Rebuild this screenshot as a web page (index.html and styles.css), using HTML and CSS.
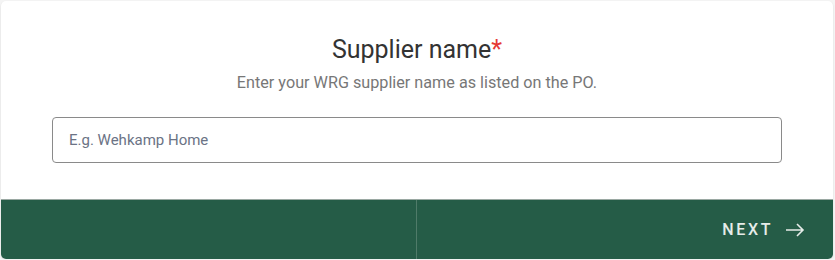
FILE: index.html
```html
<!DOCTYPE html>
<html lang="en">
<head>
    <meta charset="UTF-8">
    <meta name="viewport" content="width=device-width, initial-scale=1.0">
    <title>Supplier name</title>
    <link rel="stylesheet" href="styles.css">
</head>
<body>
    <div class="card">
        <div class="step">
            <h2 class="step-title">Supplier name<span class="required">*</span></h2>
            <p class="step-hint">Enter your WRG supplier name as listed on the PO.</p>
            <input type="text" class="field" placeholder="E.g. Wehkamp Home">
        </div>
        <div class="actions">
            <button type="button" class="action back"></button>
            <button type="button" class="action next">
                NEXT
                <svg width="20" height="14" viewBox="0 0 20 14" fill="none" stroke="currentColor" stroke-width="1.6">
                    <path d="M1 7h17M12 1l6 6-6 6"/>
                </svg>
            </button>
        </div>
    </div>
</body>
</html>
```

FILE: styles.css
```css
body {
    margin: 0;
    padding: 1px 2px 0 1px;
    background-color: #f4f4f4;
    font-family: Roboto, Arial, sans-serif;
}
.card {
    background: white;
    border-radius: 5px;
    box-shadow: 0 1px 2px rgba(0, 0, 0, 0.12);
    overflow: hidden;
}
.step {
    display: flex;
    flex-direction: column;
    align-items: center;
    padding: 32px 51px 36px 51px;
}
.step-title {
    margin: 0;
    font-size: 25px;
    font-weight: 400;
    color: #333;
    line-height: 33px;
}
.required {
    color: #e53935;
}
.step-hint {
    margin: 6px 0 0 0;
    font-size: 16.2px;
    color: #777;
    line-height: 22px;
}
.field {
    box-sizing: border-box;
    width: 100%;
    height: 46px;
    margin-top: 23px;
    padding: 0 16px;
    border: 1px solid #8a8a8a;
    border-radius: 4px;
    font-family: Roboto, Arial, sans-serif;
    font-size: 15px;
    color: #333;
}
.field::placeholder {
    color: #6b7385;
}
.actions {
    display: grid;
    grid-template-columns: minmax(0, 1fr) minmax(0, 1fr);
    height: 59px;
    background-color: #255c47;
    border-top: 1px solid #9aa8a2;
}
.action {
    box-sizing: border-box;
    background: transparent;
    border: none;
    color: #e6ece9;
    font-family: Roboto, Arial, sans-serif;
    font-size: 16px;
    font-weight: 500;
    letter-spacing: 2.6px;
    cursor: pointer;
}
.back {
    border-right: 1px solid #4f7b69;
}
.next {
    display: flex;
    align-items: center;
    justify-content: flex-end;
    gap: 12px;
    padding-right: 28px;
}
```
